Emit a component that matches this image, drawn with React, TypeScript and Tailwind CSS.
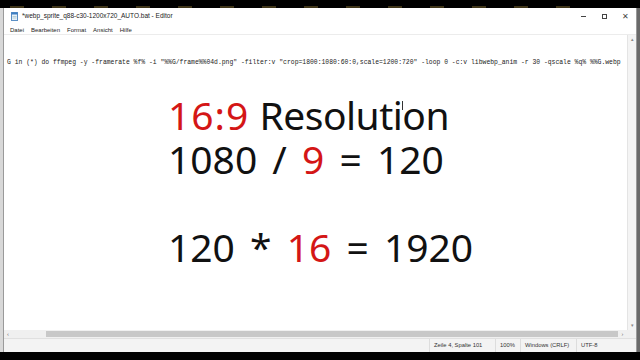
import React from "react";

const mono = { fontFamily: '"Liberation Mono", "DejaVu Sans Mono", monospace' };
const ui = { fontFamily: '"Liberation Sans", Arial, sans-serif' };
const big = { fontFamily: '"Noto Sans", "Open Sans", sans-serif' };

const CODE =
  'G in (*) do ffmpeg -y -framerate %f% -i "%%G/frame%%04d.png" -filter:v "crop=1800:1080:60:0,scale=1200:720" -loop 0 -c:v libwebp_anim -r 30 -qscale %q% %%G.webp';

function NotepadIcon() {
  return (
    <svg width="7" height="9" viewBox="0 0 7 9" className="shrink-0">
      <rect x="0.5" y="0.5" width="6" height="8" fill="#e8f2fb" stroke="#5b8fc4" strokeWidth="1" />
      <rect x="0.5" y="0.5" width="6" height="2" fill="#3d7fc1" />
      <line x1="1.5" y1="4.5" x2="5.5" y2="4.5" stroke="#9bb" strokeWidth="0.6" />
      <line x1="1.5" y1="6" x2="5.5" y2="6" stroke="#9bb" strokeWidth="0.6" />
    </svg>
  );
}

export default function App() {
  return (
    <div className="w-[640px] h-[360px] bg-black flex flex-col overflow-hidden">
      <div className="h-[8px] shrink-0 bg-black flex items-end gap-[28px] pl-[10px]">
        {Array.from({ length: 14 }).map((_, i) => (
          <div key={i} className="w-[14px] h-[2px] bg-[#6b5a2a] opacity-60" />
        ))}
      </div>
      <div className="flex flex-1 min-h-0">
        <div className="w-[3px] bg-[#d8d8d8] shrink-0" />
        <div className="flex-1 flex flex-col bg-white border-l border-r border-[#9a9a9a] min-w-0">
          {/* title bar */}
          <div className="h-[17px] shrink-0 flex items-center pl-[7px]" style={ui}>
            <NotepadIcon />
            <span className="ml-[4px] text-[6.5px] text-[#222] leading-none">
              *webp_sprite_q88-c30-1200x720_AUTO.bat - Editor
            </span>
            <div className="ml-auto flex items-center h-full">
              <div className="w-[21px] flex justify-center">
                <div className="w-[5px] h-[1px] bg-[#444]" />
              </div>
              <div className="w-[21px] flex justify-center">
                <div className="w-[5px] h-[5px] border border-[#444]" />
              </div>
              <div className="w-[21px] flex justify-center text-[8px] text-[#444] leading-none">✕</div>
            </div>
          </div>
          {/* menu bar */}
          <div className="h-[9px] shrink-0 flex items-center gap-[7px] pl-[6px] text-[6px] text-[#222] leading-none" style={ui}>
            <span>Datei</span>
            <span>Bearbeiten</span>
            <span>Format</span>
            <span>Ansicht</span>
            <span>Hilfe</span>
          </div>
          {/* editor */}
          <div className="flex-1 min-h-0 flex border-t border-[#ececec]">
            <div className="flex-1 min-w-0 flex flex-col relative overflow-hidden">
              <div
                className="mt-[24px] pl-[3px] text-[6.4px] leading-[8px] text-[#222] whitespace-nowrap"
                style={mono}
              >
                {CODE}
              </div>
              <div className="ml-[164px] mt-[26px] text-[39px] leading-[44px] text-[#111]" style={big}>
                <div>
                  <span className="text-[#d41616] tracking-[1px]">16:9</span>{" "}
                  <span className="tracking-[-0.5px]">Resolution</span>
                </div>
                <div className="[word-spacing:5px]">
                  1080 / <span className="text-[#d41616]">9</span> = 120
                </div>
                <div>&nbsp;</div>
                <div className="[word-spacing:5px]">
                  120 * <span className="text-[#d41616]">16</span> = 1920
                </div>
              </div>
              {/* mouse I-beam */}
              <div className="absolute left-[398px] top-[66px] w-[1px] h-[9px] bg-[#333]" />
            </div>
            <div className="w-[9px] shrink-0 bg-[#f4f4f4] border-l border-[#e4e4e4] flex flex-col justify-between items-center py-[2px] text-[5px] text-[#888] leading-none">
              <span>▴</span>
              <span>▾</span>
            </div>
          </div>
          {/* horizontal scrollbar */}
          <div className="h-[8px] shrink-0 flex items-center bg-[#f0f0f0]">
            <span className="w-[8px] text-center text-[6px] text-[#666] leading-none">‹</span>
            <div className="w-[34px] h-full bg-[#f0f0f0]" />
            <div className="flex-1 h-[6px] bg-[#c8c8c8]" />
            <span className="w-[9px] text-center text-[6px] text-[#666] leading-none">›</span>
            <div className="w-[9px] h-full bg-[#f0f0f0]" />
          </div>
          {/* status bar */}
          <div className="h-[14px] shrink-0 flex items-center text-[5.8px] text-[#333] leading-none border-t border-[#e0e0e0] bg-[#f3f3f3]" style={ui}>
            <div className="flex-1" />
            <div className="w-[66px] pl-[4px] border-l border-[#ddd] h-full flex items-center">Zeile 4, Spalte 101</div>
            <div className="w-[25px] pl-[4px] border-l border-[#ddd] h-full flex items-center">100%</div>
            <div className="w-[56px] pl-[4px] border-l border-[#ddd] h-full flex items-center">Windows (CRLF)</div>
            <div className="w-[60px] pl-[4px] border-l border-[#ddd] h-full flex items-center">UTF-8</div>
          </div>
        </div>
        <div className="w-[3px] bg-[#6a6a6a] shrink-0" />
      </div>
      <div className="h-[8px] shrink-0 bg-black" />
    </div>
  );
}
